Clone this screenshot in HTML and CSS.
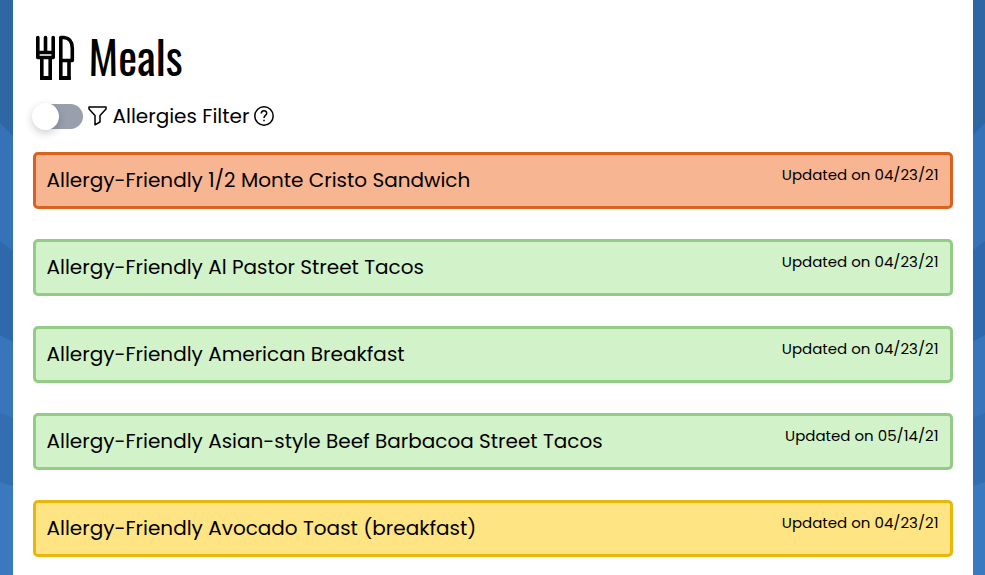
FILE: index.html
```html
<!DOCTYPE html>
<html lang="en">
<head>
<meta charset="utf-8">
<meta name="viewport" content="width=device-width, initial-scale=1">
<title>Meals</title>
<link rel="stylesheet" href="styles.css">
</head>
<body>
<svg class="backdrop" viewBox="0 0 985 575" preserveAspectRatio="none" aria-hidden="true">
  <defs>
    <g id="bands">
      <path fill="#2f67a5" d="M0 0H493V575H0z"/>
      <path fill="#3672b7" d="M0 123L13 136L493 500V575H0z"/>
      <path fill="#3069ab" d="M0 241L13 251L493 540V575H0z"/>
      <path fill="#3875bb" d="M0 335L13 342L493 560V575H0z"/>
      <path fill="#336eb2" d="M0 413L13 418L493 570V575H0z"/>
      <path fill="#3a78c0" d="M0 482L13 486L493 575H0z"/>
    </g>
  </defs>
  <use href="#bands"/>
  <use href="#bands" transform="translate(985 0) scale(-1 1)"/>
</svg>
<main class="page">
  <h1 class="heading">
    <svg class="heading-icon" viewBox="0 0 40 48" aria-hidden="true">
      <path d="M2.800 5.500V25.500H18.200V5.500M10.500 5.500V20M2.800 20.500H18.200M6.800 27V47H15.200V27M25.800 47V5.500H29Q37.300 6.500 37.300 16V28.500H25.800M34 28.500V47H25.800"/>
      <path class="heading-icon-base" d="M7 46H15M26 46H34"/>
    </svg>
    Meals
  </h1>
  <div class="filter">
    <input class="switch" type="checkbox" id="allergies">
    <label class="filter-label" for="allergies">
      <svg class="icon" viewBox="0 0 20 20" aria-hidden="true"><path d="M1 1H18V3L12 9.500V16L7 18.800V9.500L1 3z"/></svg>
      Allergies Filter
    </label>
    <button class="help" type="button" aria-label="About the allergies filter">
      <svg class="icon" viewBox="0 0 20 20" aria-hidden="true"><circle cx="10" cy="10" r="9.200"/><path d="M7.300 7.500C7.300 3.900 12.700 4 12.700 7.300C12.700 9.500 10 9.300 10 12M10 13.700V15.300"/></svg>
    </button>
  </div>
  <ul class="meals">
    <li class="meal meal-avoid"><span class="name">Allergy-Friendly 1/2 Monte Cristo Sandwich</span><span class="updated">Updated on 04/23/21</span></li>
    <li class="meal meal-safe"><span class="name">Allergy-Friendly Al Pastor Street Tacos</span><span class="updated">Updated on 04/23/21</span></li>
    <li class="meal meal-safe"><span class="name">Allergy-Friendly American Breakfast</span><span class="updated">Updated on 04/23/21</span></li>
    <li class="meal meal-safe"><span class="name">Allergy-Friendly Asian-style Beef Barbacoa Street Tacos</span><span class="updated">Updated on 05/14/21</span></li>
    <li class="meal meal-caution"><span class="name">Allergy-Friendly Avocado Toast (breakfast)</span><span class="updated">Updated on 04/23/21</span></li>
  </ul>
</main>
</body>
</html>
```
FILE: styles.css
```css
* { box-sizing: border-box; }

body {
  margin: 0;
  color: #000;
  font: 400 20px/30px Poppins, Inter, sans-serif;
}

.backdrop {
  position: fixed;
  inset: 0;
  z-index: -1;
  width: 100%;
  height: 100%;
}

.page {
  max-width: 960px;
  min-height: 100vh;
  margin: 0 auto;
  padding: 26px 20px 16px;
  background: #fff;
}

.heading {
  display: flex;
  align-items: center;
  gap: 14px;
  margin: 0;
  font: 400 45px/60px Oswald, "Liberation Sans Narrow", "Liberation Sans", sans-serif;
}

.heading-icon {
  width: 40px;
  height: 48px;
  margin-left: 2px;
  fill: none;
  stroke: #000;
  stroke-width: 3.6;
  stroke-linejoin: round;
  stroke-linecap: round;
}

.heading-icon-base { stroke-width: 4; }

.filter {
  display: flex;
  align-items: center;
  gap: 5px;
  margin: 15px 0 21px;
}

.filter-label {
  display: flex;
  align-items: center;
  gap: 5px;
}

.icon {
  display: block;
  width: 20px;
  height: 20px;
  fill: none;
  stroke: #000;
  stroke-width: 1.5;
  stroke-linejoin: round;
}

.switch {
  appearance: none;
  display: flex;
  align-items: center;
  width: 50px;
  height: 25px;
  margin: 0;
  border-radius: 13px;
  background: #9a9fae;
}

.switch::before {
  content: "";
  flex: none;
  width: 27px;
  height: 27px;
  margin-left: -1px;
  border-radius: 50%;
  background: #fff;
  box-shadow: 0 3px 8px rgb(0 0 0 / 20%);
}

.switch:checked { background: #3672b7; }
.switch:checked::before { margin-left: 24px; }

.help {
  padding: 0;
  border: 0;
  background: none;
}

.meals {
  display: grid;
  gap: 30px;
  margin: 0;
  padding: 0;
  list-style: none;
}

.meal {
  display: flex;
  justify-content: space-between;
  gap: 12px;
  padding: 5px 11px 11px;
  border: 3px solid;
  border-radius: 5px;
}

.meal-avoid { border-color: #d9621e; background: #f7b592; }
.meal-safe { border-color: #93cc86; background: #d2f2c9; }
.meal-caution { border-color: #e8b70a; background: #ffe483; }

.name { padding-top: 5px; }

.updated {
  flex: none;
  font-size: 15px;
}
```
